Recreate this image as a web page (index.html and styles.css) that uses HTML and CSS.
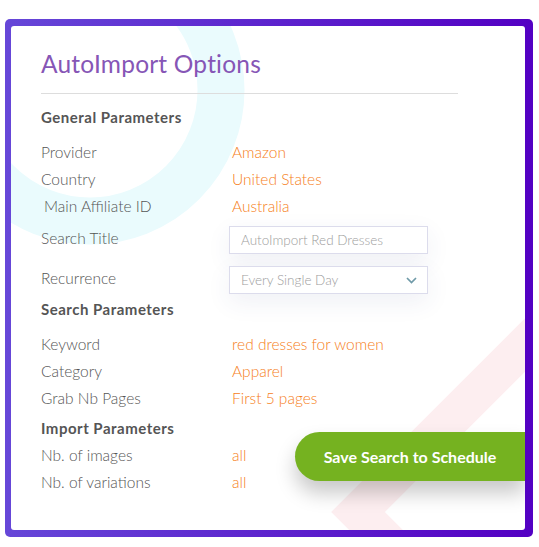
FILE: index.html
```html
<!DOCTYPE html>
<html lang="en">
<head>
    <meta charset="UTF-8">
    <meta name="viewport" content="width=device-width, initial-scale=1.0">
    <title>AutoImport Options</title>
    <link rel="stylesheet" href="styles.css">
</head>
<body>
    <div class="frame">
        <div class="card">
            <!-- background decoration -->
            <svg class="decor" width="514" height="504" viewBox="0 0 514 504">
                <circle cx="79" cy="64" r="131" fill="none" stroke="#eafbfd" stroke-width="47"/>
                <polyline points="565,268 347,486 397,536" fill="none" stroke="#fdeef0" stroke-width="38"/>
            </svg>

            <h1 class="title">AutoImport Options</h1>
            <hr class="divider">

            <h2 class="section-title">General Parameters</h2>
            <div class="row"><span class="label">Provider</span><span class="value">Amazon</span></div>
            <div class="row"><span class="label">Country</span><span class="value">United States</span></div>
            <div class="row"><span class="label indent">Main Affiliate ID</span><span class="value">Australia</span></div>
            <div class="row field">
                <span class="label">Search Title</span>
                <input class="text-input" type="text" value="AutoImport Red Dresses">
            </div>
            <div class="row field recur">
                <span class="label">Recurrence</span>
                <div class="select">
                    <span>Every Single Day</span>
                    <svg width="11" height="7" viewBox="0 0 11 7"><path d="M1 1l4.5 4.5L10 1" fill="none" stroke="#6f9aa8" stroke-width="1.7"/></svg>
                </div>
            </div>

            <h2 class="section-title tight">Search Parameters</h2>
            <div class="row"><span class="label">Keyword</span><span class="value">red dresses for women</span></div>
            <div class="row"><span class="label">Category</span><span class="value">Apparel</span></div>
            <div class="row"><span class="label">Grab Nb Pages</span><span class="value">First 5 pages</span></div>

            <div class="import">
                <div class="import-params">
                    <h2 class="section-title import-title">Import Parameters</h2>
                    <div class="row"><span class="label">Nb. of images</span><span class="value">all</span></div>
                    <div class="row"><span class="label">Nb. of variations</span><span class="value">all</span></div>
                </div>
                <button class="save-btn">Save Search to Schedule</button>
            </div>
        </div>
    </div>
</body>
</html>
```

FILE: styles.css
```css
body {
    margin: 0;
    background: #fff;
    font-family: Lato, "Open Sans", sans-serif;
}
.frame {
    width: 528px;
    height: 518px;
    box-sizing: border-box;
    margin: 19px 0 0 5px;
    padding: 7px 8px 7px 6px;
    border-radius: 5px;
    background: linear-gradient(90deg, #6647d8, #5300c3);
}
.card {
    position: relative;
    z-index: 0;
    height: 504px;
    box-sizing: border-box;
    padding: 23px 30px 0 30px;
    background: #fff;
    border-radius: 3px;
    overflow: hidden;
}
.decor {
    position: absolute;
    left: 0;
    top: 0;
    z-index: -1;
}
.title {
    margin: 0;
    font-size: 24.5px;
    line-height: 29px;
    font-weight: 400;
    letter-spacing: 0.2px;
    color: #8656b6;
}
.divider {
    width: 417px;
    margin: 15px 0 0;
    border: none;
    border-top: 1px solid #dddddd;
}
.section-title {
    margin: 10px 0 9px;
    font-size: 15px;
    line-height: 26px;
    font-weight: 700;
    letter-spacing: 0.5px;
    color: #555;
}
.section-title.tight {
    margin-top: 2px;
}
.section-title.import-title {
    margin: 4px 0 1px;
}
.row {
    display: flex;
    align-items: flex-start;
    min-height: 26px;
    margin-top: 1px;
    font-size: 15.5px;
    line-height: 26px;
    font-weight: 300;
}
.label {
    width: 188px;
    flex-shrink: 0;
    color: #555;
}
.label.indent {
    padding-left: 3px;
    width: 185px;
}
.value {
    padding-left: 3px;
    color: #f6801a;
}
.row.field {
    margin-top: 7px;
}
.row.recur {
    margin-top: 12px;
}
.field .label {
    line-height: 24px;
}
.text-input,
.select {
    width: 199px;
    height: 28px;
    box-sizing: border-box;
    padding: 0 11px;
    border: 1px solid #dcdcec;
    background: #fff;
    font-family: Lato, sans-serif;
    font-size: 13.5px;
    font-weight: 300;
    color: #9d9d9d;
    box-shadow: 0 8px 24px rgba(50, 70, 130, 0.08);
    outline: none;
}
.select {
    display: flex;
    align-items: center;
    justify-content: space-between;
    line-height: 26px;
    padding-right: 10px;
}
.import {
    display: flex;
}
.import-params {
    flex: 1;
}
.save-btn {
    align-self: flex-start;
    width: 230px;
    height: 49px;
    margin: 21px -30px 0 0;
    border: none;
    border-radius: 25px 0 0 25px;
    background: #75b220;
    color: #fff;
    font-family: Lato, sans-serif;
    font-size: 16px;
    font-weight: 700;
    box-shadow: 0 12px 20px rgba(0, 0, 0, 0.22);
    cursor: pointer;
}
```
